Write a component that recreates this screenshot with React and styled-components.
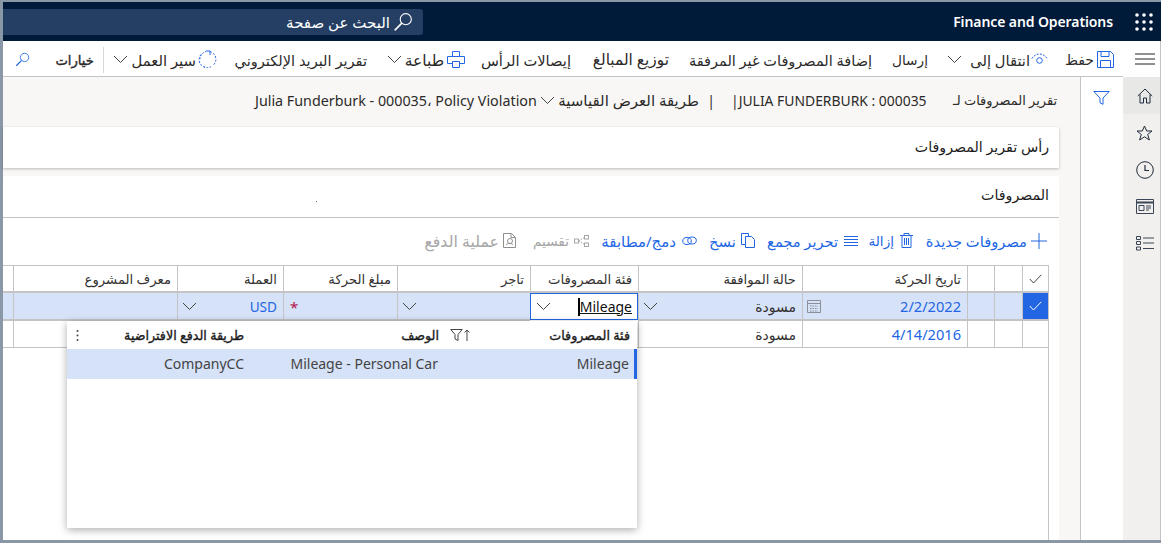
import React from 'react';
import styled, { createGlobalStyle } from 'styled-components';

const Global = createGlobalStyle`
  html, body { margin: 0; padding: 0; height: 100%; overflow: hidden; background: #fff; }
  #root { height: 100%; }
  * { box-sizing: border-box; }
  body { font-family: "Noto Sans", "DejaVu Sans", sans-serif; font-size: 14px; color: #323130; }
`;

const BLUE = '#2266e3';
const LINE = '#c4c4c4';

const Shell = styled.div`
  direction: rtl; width: 1161px; height: 543px; display: flex; flex-direction: column;
  border-top: 2px solid #8a97a6; border-left: 3px solid #8a97a6; border-bottom: 3px solid #8a97a6;
`;
const TopBar = styled.header`
  height: 39px; flex: none; background: #001a39; display: flex; align-items: center; color: #fff;
`;
const AppsButton = styled.div`
  width: 48px; display: flex; justify-content: center; padding-left: 14px;
`;
const Title = styled.div`
  font-weight: 600; font-size: 14px; width: 161px; white-space: nowrap; direction: ltr; text-align: right; letter-spacing: -.1px;
`;
const SearchBox = styled.div`
  margin-right: auto; width: 420px; height: 26px; background: #243f63; border-radius: 0 3px 3px 0;
  display: flex; align-items: center; gap: 3px; padding-right: 10px; font-size: 15px;
`;
const Body = styled.div`
  flex: 1; display: flex; min-height: 0;
`;
const Sidebar = styled.nav`
  width: 38px; flex: none; background: #f1f0ee; border-right: 1px solid ${LINE}; display: flex; flex-direction: column;
`;
const SideItem = styled.div`
  height: ${p => p.$h || 37}px; display: flex; align-items: center; justify-content: center; padding-left: 6px;
  background: ${p => p.$bg || 'transparent'}; color: #1f2a3a;
`;
const Workspace = styled.div`
  flex: 1; min-width: 0; display: flex; flex-direction: column;
`;
const CommandBar = styled.div`
  height: 36px; flex: none; display: flex; align-items: center; padding: 2px 9px 0 0; background: #fff;
  border-bottom: 1px solid ${LINE}; color: #2b2a29; white-space: nowrap;
`;
const Command = styled.div`
  display: flex; align-items: center; gap: ${p => p.$inner ?? 3}px; margin-left: ${p => p.$gap || 0}px; margin-right: ${p => p.$before || 0}px;
  color: ${p => p.$disabled ? '#a6a6a6' : 'inherit'};
  -webkit-text-stroke: ${p => p.$bold ? '.4px' : '0'};
`;
const CmdLabel = styled.span`
  display: inline-block; width: ${p => p.$w}px; white-space: nowrap; font-size: ${p => p.$fs || 14}px;
`;
const ChevSlot = styled.span`
  display: inline-flex; margin-right: ${p => p.$m || 0}px;
`;
const Divider = styled.div`
  width: 1px; height: 26px; background: #d8d8d8; margin: 0 9px;
`;
const IconSlot = styled.span`
  display: inline-flex; color: ${p => p.$c || BLUE}; flex: none;
`;
const Content = styled.div`
  flex: 1; display: flex; min-height: 0;
`;
const FilterPane = styled.aside`
  width: 43px; flex: none; background: #fff; border-left: 1px solid ${LINE}; padding: 13px 13px 0 0;
`;
const Main = styled.main`
  flex: 1; min-width: 0; background: #f8f7f5; padding-right: 21px; display: flex; flex-direction: column;
`;
const Breadcrumb = styled.div`
  height: 50px; flex: none; display: flex; align-items: center; padding: 0 2px 4px 0; white-space: nowrap; color: #2b2a29;
`;
const Crumb = styled.span`
  display: inline-block; width: ${p => p.$w}px; margin-left: ${p => p.$gap || 0}px; margin-right: ${p => p.$before || 0}px; white-space: nowrap;
  direction: ${p => p.$ltr ? 'ltr' : 'rtl'}; font-size: ${p => p.$fs || 14}px; flex: none;
  text-align: ${p => p.$ltr ? 'left' : 'right'};
`;
const Card = styled.section`
  background: #fff; flex: none; border-radius: 2px 2px 0 0; box-shadow: 0 1px 3px rgba(0,0,0,.25);
`;
const HeaderCard = styled(Card)`
  height: 41px; margin-bottom: 8px; display: flex; align-items: center; padding: 0 10px 3px 0; font-size: 14.2px; font-weight: 500; color: #1a1a1a;
`;
const ExpenseCard = styled(Card)`
  flex: 1; box-shadow: none; display: flex; flex-direction: column; min-height: 0;
`;
const CardHead = styled.div`
  height: 42px; flex: none; border-bottom: 1px solid ${LINE}; display: flex; align-items: center; justify-content: space-between;
  padding: 0 10px 5px 313px; font-size: 14.2px; font-weight: 500; color: #1a1a1a;
`;
const Speck = styled.span`
  width: 1px; height: 1px; background: #666; margin-top: 15px;
`;
const ActionBar = styled.div`
  height: 47px; flex: none; display: flex; align-items: center; padding: 0 12px 2px 0; color: ${BLUE}; white-space: nowrap;
`;
const TableWrap = styled.div`
  flex: 1; margin-right: 10px; border-right: 1px solid ${LINE}; position: relative; min-height: 0;
`;
const Grid = styled.div`
  display: grid;
  grid-template-columns: 26px 28px 27px 165px 164px 108px 133px 114px 106px 164px 10px;
  > :nth-child(11n) { border-left: 0; }
`;
const Cell = styled.div`
  height: ${p => p.$h}px; border-left: 1px solid ${LINE}; display: flex; align-items: center; justify-content: space-between;
  padding: 0 ${p => p.$pr ?? 6}px 0 ${p => p.$pl ?? 4}px; white-space: nowrap; overflow: hidden; font-size: ${p => p.$fs || 14}px;
  border-bottom: ${p => p.$bb || 1}px solid ${LINE};
  border-top: ${p => p.$bt ? `1px solid ${LINE}` : '0'};
  background: ${p => p.$bg || 'transparent'};
  color: ${p => p.$c || '#323130'};
`;
const InputCell = styled(Cell)`
  padding: 0 5px; border: 1px solid ${BLUE}; background: #fff; color: #111;
`;
const InputText = styled.span`
  text-decoration: underline; border-left: 2px solid #000; line-height: 18px; direction: ltr;
`;
const Star = styled.span`
  color: #b4134a; font-size: 15px; line-height: 1; margin-top: 3px;
`;
const Popup = styled.div`
  position: absolute; top: 56px; right: 411px; width: 570px; height: 207px; background: #fff;
  box-shadow: 0 2px 8px rgba(0,0,0,.32); z-index: 2;
`;
const PopupGrid = styled.div`
  display: grid; grid-template-columns: 191px 195px 184px;
`;
const PopHead = styled.div`
  height: 28px; display: flex; align-items: center; justify-content: space-between; padding: 0 7px 0 ${p => p.$pl ?? 4}px;
  font-size: 12.7px; -webkit-text-stroke: .35px; color: #1a1a1a; white-space: nowrap;
`;
const PopCell = styled.div`
  height: 30px; display: flex; align-items: center; padding: 0 ${p => p.$pr ?? 7}px 2px 0; background: #d6e2f8; color: #444; font-size: 14px;
  border-right: ${p => p.$bar ? `3px solid ${BLUE}` : '0'}; white-space: nowrap;
`;

const Svg = ({ w = 16, h = 16, children, sw = 1 }) => (
  <svg width={w} height={h} viewBox={`0 0 ${w} ${h}`} fill="none" stroke="currentColor" strokeWidth={sw} style={{ display: 'block' }}>{children}</svg>
);
const Chevron = () => <IconSlot $c="#444"><Svg w={15} h={9}><path d="M1 1l6.500 6.500L14 1" /></Svg></IconSlot>;
const Search = ({ c, s = 18 }) => <IconSlot $c={c}><svg width={s} height={s} viewBox="0 0 18 18" fill="none" stroke="currentColor" style={{ display: 'block' }}><circle cx="11.500" cy="6.500" r="5" /><path d="M8 10L1.500 16.500" strokeWidth="1.400" /></svg></IconSlot>;
const Apps = () => <svg width="18" height="18" fill="#fff">{[2, 9, 16].flatMap(y => [2, 9, 16].map(x => <circle key={x + '-' + y} cx={x} cy={y} r="1.800" />))}</svg>;
const SaveI = () => <IconSlot><Svg w={17} h={17}><path d="M.5.500h13l3 3v13H.5z" /><path d="M4 .5v5h8v-5M3.500 16.500v-7h10v7" /></Svg></IconSlot>;
const EyeI = () => <IconSlot><Svg w={17} h={14}><path d="M.8 5.500C3 2.600 5.500 1 8.500 1s5.500 1.600 7.700 4.500" strokeDasharray="2 1.200" /><circle cx="8.500" cy="7.500" r="2.800" /></Svg></IconSlot>;
const PrintI = () => <IconSlot><Svg w={18} h={17}><path d="M5.500 5.500v-5h7v5M5 12.500H.5v-7h17v7H13" /><path d="M5.500 10.500h7v6h-7z" /></Svg></IconSlot>;
const FlowI = () => <IconSlot><Svg w={19} h={19}><path d="M12 1.600A8 8 0 0 1 15.500 15" strokeDasharray="2 1.500" /><path d="M7 17.400A8 8 0 0 1 3.500 4" strokeDasharray="2 1.500" /><path d="M5.800 16.500A8 8 0 0 0 13.500 16.500M2 9a8 8 0 0 1 6-7.500" strokeDasharray="1.500 1.500" /><path d="M12 1v4M12 1H8" /></Svg></IconSlot>;
const PlusI = () => <IconSlot><Svg w={16} h={16}><path d="M8 0v16M0 8h16" /></Svg></IconSlot>;
const TrashI = () => <IconSlot><Svg w={13} h={15}><path d="M0 2.500h13M4 2.500V.5h5v2M2 2.500v12h9v-12M4.500 5v7M6.500 5v7M8.500 5v7" /></Svg></IconSlot>;
const ListI = () => <IconSlot><Svg w={14} h={12}><path d="M0 1.500h14M0 4.500h14M0 7.500h14M0 10.500h14" /></Svg></IconSlot>;
const CopyI = () => <IconSlot><Svg w={14} h={15}><path d="M4.500 3.500h6l3 3v8h-9zM4.500 11.500H.5V.5h7v3" /></Svg></IconSlot>;
const LinkI = () => <IconSlot><Svg w={15} h={10}><ellipse cx="5" cy="5" rx="4.300" ry="3.500" /><ellipse cx="10" cy="4.500" rx="4.300" ry="3.500" /></Svg></IconSlot>;
const SplitI = () => <IconSlot $c="#a6a6a6"><Svg w={15} h={12}><rect x=".5" y="4" width="4" height="4" /><rect x="10.500" y=".5" width="4" height="3.500" /><rect x="10.500" y="8" width="4" height="3.500" /><path d="M4.500 6L10.500 2.500M4.500 6l6 3.500" strokeDasharray="1.500 1" /></Svg></IconSlot>;
const PayI = () => <IconSlot $c="#8f8f8f"><Svg w={13} h={15}><path d="M.5.500h8l4 4v10H.5z" /><circle cx="7" cy="8" r="2.500" /><path d="M3 12c1-2 6-2 7 0M8 .5v4h4" /></Svg></IconSlot>;
const FilterI = () => <IconSlot $c={BLUE}><Svg w={17} h={14}><path d="M.8.500h15.400L10 7v6.300l-3-1.500V7z" /></Svg></IconSlot>;
const CheckI = ({ c }) => <IconSlot $c={c}><Svg w={13} h={10}><path d="M.8 5l3.700 4L12.300.8" /></Svg></IconSlot>;
const CalI = () => <IconSlot $c="#8a8f99"><Svg w={14} h={14}><path d="M.5 1.500h13v12H.5zM.5 4.500h13" /><path d="M3 7h8M3 9.500h8M3 12h8" strokeDasharray="1.500 1" /></Svg></IconSlot>;
const Kebab = () => <svg width="3" height="13" fill="#444"><circle cx="1.500" cy="2" r="1" /><circle cx="1.500" cy="6.500" r="1" /><circle cx="1.500" cy="11" r="1" /></svg>;
const SortFilter = () => <IconSlot $c="#444"><Svg w={20} h={14}><path d="M17 13V2M14.500 4.500L17 2l2.500 2.500" /><path d="M.8 1.500h11.400L8 6.500v6l-3-1.500V6.500z" /></Svg></IconSlot>;

const Hamburger = () => <IconSlot $c="#222"><Svg w={20} h={12}><path d="M0 1h20M0 6h20M0 11h20" /></Svg></IconSlot>;
const HomeI = () => <IconSlot $c="#1f2a3a"><Svg w={16} h={16}><path d="M.8 8L8 1l7.200 7M3 6.500V15h3.500v-5h3v5H13V6.500" /></Svg></IconSlot>;
const StarI = () => <IconSlot $c="#1f2a3a"><Svg w={17} h={16}><path d="M8.500 1l2.200 5h5.300l-4.300 3.500 1.700 5.500-4.900-3.200L3.600 15l1.700-5.500L1 6h5.300z" /></Svg></IconSlot>;
const ClockI = () => <IconSlot $c="#1f2a3a"><Svg w={18} h={18}><circle cx="9" cy="9" r="8.300" /><path d="M9 4v5.500h4" strokeWidth="1.200" /></Svg></IconSlot>;
const PanelI = () => <IconSlot $c="#3a4656"><Svg w={18} h={15}><path d="M.5.500h17v14H.5z" /><path d="M.5 3.500h17" strokeWidth="2" /><path d="M3 6.500h5v5H3zM10 7h5M10 9h5M10 11h3" /></Svg></IconSlot>;
const ChecklistI = () => <IconSlot $c="#3a4656"><Svg w={18} h={15}><path d="M.5.500h4v3h-4zM.5 5.500h4v3h-4zM.5 11h4v3h-4zM7 2h11M7 7h11M7 12.500h11" /></Svg></IconSlot>;

const commands = [
  { label: 'حفظ', w: 29, fs: 14, icon: <SaveI />, gap: 17 },
  { label: 'انتقال إلى', w: 60, fs: 14.7, icon: <EyeI />, chev: 8, gap: 19, inner: 1 },
  { label: 'إرسال', w: 35, fs: 13.7, gap: 21 },
  { label: 'إضافة المصروفات غير المرفقة', w: 182, fs: 14.5, gap: 21 },
  { label: 'توزيع المبالغ', w: 78, fs: 15.4, gap: 20 },
  { label: 'إيصالات الرأس', w: 88, fs: 14.7, gap: 18 },
  { label: 'طباعة', w: 37, fs: 15.5, icon: <PrintI />, chev: 5, gap: 20, inner: 3 },
  { label: 'تقرير البريد الإلكتروني', w: 132, fs: 14.6, gap: 18 },
  { label: 'سير العمل', w: 63, fs: 14.8, icon: <FlowI />, chev: 5, inner: 2 },
];

const actions = [
  { label: 'مصروفات جديدة', w: 100, fs: 14.7, icon: <PlusI />, gap: 14, inner: 4 },
  { label: 'إزالة', w: 24, fs: 13.6, icon: <TrashI />, gap: 12, inner: 6 },
  { label: 'تحرير مجمع', w: 70, fs: 14.6, icon: <ListI />, gap: 13, inner: 6 },
  { label: 'نسخ', w: 25, fs: 14.9, icon: <CopyI />, gap: 14, inner: 5 },
  { label: 'دمج/مطابقة', w: 73, fs: 15, icon: <LinkI />, gap: 14, inner: 6 },
  { label: 'تقسيم', w: 38, fs: 13.6, icon: <SplitI />, gap: 15, inner: 5, disabled: true },
  { label: 'عملية الدفع', w: 72, fs: 15.8, icon: <PayI />, inner: 4, disabled: true },
];

const headers = ['', '', '', 'تاريخ الحركة', 'حالة الموافقة', 'فئة المصروفات', 'تاجر', 'مبلغ الحركة', 'العملة', 'معرف المشروع', ''];
const SEL = '#d6e2f8';

export default function App() {
  return (
    <>
      <Global />
      <Shell>
        <TopBar>
          <AppsButton><Apps /></AppsButton>
          <Title>Finance and Operations</Title>
          <SearchBox><Search c="#fff" s={20} /><span>البحث عن صفحة</span></SearchBox>
        </TopBar>
        <Body>
          <Sidebar>
            <SideItem $h={36} $bg="#fff"><Hamburger /></SideItem>
            <SideItem $h={37} $bg="#e8e8e6"><HomeI /></SideItem>
            <SideItem><StarI /></SideItem>
            <SideItem><ClockI /></SideItem>
            <SideItem><PanelI /></SideItem>
            <SideItem><ChecklistI /></SideItem>
          </Sidebar>
          <Workspace>
            <CommandBar>
              {commands.map(c => (
                <Command key={c.label} $gap={c.gap} $inner={c.inner}>
                  {c.icon}
                  <CmdLabel $w={c.w} $fs={c.fs}>{c.label}</CmdLabel>
                  {c.chev && <ChevSlot $m={c.chev - (c.inner ?? 3)}><Chevron /></ChevSlot>}
                </Command>
              ))}
              <Divider />
              <Command $bold><CmdLabel $w={39} $fs={13.2}>خيارات</CmdLabel></Command>
              <Command $before={25}><Search c={BLUE} s={15} /></Command>
            </CommandBar>
            <Content>
              <FilterPane><FilterI /></FilterPane>
              <Main>
                <Breadcrumb>
                  <Crumb $w={105} $gap={26} $fs={12.9}>تقرير المصروفات لـ</Crumb>
                  <Crumb $w={195} $gap={16} $ltr $fs={13.9}>|JULIA FUNDERBURK : 000035</Crumb>
                  <Crumb $w={4} $gap={12}>|</Crumb>
                  <Crumb $w={141} $gap={3} $fs={15}>طريقة العرض القياسية</Crumb>
                  <Chevron />
                  <Crumb $w={282} $ltr $before={3} $fs={14.3}>Julia Funderburk - 000035، Policy Violation</Crumb>
                </Breadcrumb>
                <HeaderCard>رأس تقرير المصروفات</HeaderCard>
                <ExpenseCard>
                  <CardHead><span>المصروفات</span><Speck /></CardHead>
                  <ActionBar>
                    {actions.map(a => (
                      <Command key={a.label} $gap={a.gap} $inner={a.inner} $disabled={a.disabled}>
                        {a.icon}
                        <CmdLabel $w={a.w} $fs={a.fs}>{a.label}</CmdLabel>
                      </Command>
                    ))}
                  </ActionBar>
                  <TableWrap>
                    <Grid>
                      {headers.map((h, i) => (
                        <Cell key={i} $h={28} $bt $bb={2} $fs={13.2}>
                          {i === 0 ? <CheckI c="#444" /> : <span>{h}</span>}
                        </Cell>
                      ))}

                      <Cell $h={28} $bb={2} $bg={BLUE}><CheckI c="#fff" /></Cell>
                      <Cell $h={28} $bb={2} $bg={SEL} />
                      <Cell $h={28} $bb={2} $bg={SEL} />
                      <Cell $h={28} $bb={2} $bg={SEL} $c={BLUE} $fs={14.6}><span>2/2/2022</span><CalI /></Cell>
                      <Cell $h={28} $bb={2} $bg={SEL}><span>مسودة</span><Chevron /></Cell>
                      <InputCell $h={27}><InputText>Mileage</InputText><Chevron /></InputCell>
                      <Cell $h={28} $bb={2} $bg={SEL}><span /><Chevron /></Cell>
                      <Cell $h={28} $bb={2} $bg={SEL} $pl={6}><span /><Star>*</Star></Cell>
                      <Cell $h={28} $bb={2} $bg={SEL} $c={BLUE} $fs={13.6}><span>USD</span><Chevron /></Cell>
                      <Cell $h={28} $bb={2} $bg={SEL} />
                      <Cell $h={28} $bb={2} $bg={SEL} />

                      <Cell $h={27} />
                      <Cell $h={27} />
                      <Cell $h={27} />
                      <Cell $h={27} $c={BLUE} $fs={14.6}><span>4/14/2016</span></Cell>
                      <Cell $h={27}><span>مسودة</span></Cell>
                      <Cell $h={27} />
                      <Cell $h={27} />
                      <Cell $h={27} />
                      <Cell $h={27} />
                      <Cell $h={27} />
                      <Cell $h={27} />
                    </Grid>
                    <Popup>
                      <PopupGrid>
                        <PopHead><span>فئة المصروفات</span><SortFilter /></PopHead>
                        <PopHead><span>الوصف</span></PopHead>
                        <PopHead $pl={9}><span>طريقة الدفع الافتراضية</span><Kebab /></PopHead>
                        <PopCell $bar $pr={5}>Mileage</PopCell>
                        <PopCell $pr={8}>Mileage - Personal Car</PopCell>
                        <PopCell>CompanyCC</PopCell>
                      </PopupGrid>
                    </Popup>
                  </TableWrap>
                </ExpenseCard>
              </Main>
            </Content>
          </Workspace>
        </Body>
      </Shell>
    </>
  );
}
